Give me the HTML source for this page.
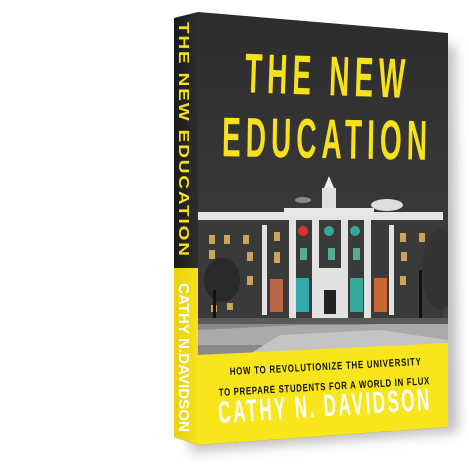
<!DOCTYPE html>
<html><head><style>
html,body{margin:0;padding:0;background:#fff;width:469px;height:469px;overflow:hidden}
svg{display:block}
text{font-family:"Liberation Sans",sans-serif;font-weight:bold}
</style></head><body>
<svg width="469" height="469" viewBox="0 0 469 469">
<defs>
<filter id="blur" x="-20%" y="-20%" width="140%" height="140%"><feGaussianBlur stdDeviation="6"/></filter>
<clipPath id="front"><polygon points="198,12 448,33 448,427 198,445"/></clipPath>
<linearGradient id="sky" x1="0" y1="0" x2="0" y2="1">
<stop offset="0" stop-color="#2c2c2c"/><stop offset="0.6" stop-color="#3c3c3c"/><stop offset="1" stop-color="#555"/>
</linearGradient>
<linearGradient id="spineG" x1="0" y1="0" x2="1" y2="0">
<stop offset="0" stop-color="#1a1a1a"/><stop offset="1" stop-color="#2e2e2e"/>
</linearGradient>
<linearGradient id="spineY" x1="0" y1="0" x2="1" y2="0">
<stop offset="0" stop-color="#e8d010"/><stop offset="1" stop-color="#f6e21a"/>
</linearGradient>
</defs>
<polygon points="185,30 455,45 458,432 190,452" fill="#000" opacity="0.25" filter="url(#blur)"/>
<polygon points="174,18 198,12 198,445 174,437" fill="url(#spineG)"/>
<polygon points="174,268 198,268 198,445 174,437" fill="url(#spineY)"/>
<g transform="translate(179,22) rotate(90) scale(1,0.8)"><text x="0" y="0" font-size="19" fill="#f4e01a" textLength="234" lengthAdjust="spacing">THE NEW EDUCATION</text></g>
<g transform="translate(179,283) rotate(90) scale(1,0.8)"><text x="0" y="0" font-size="18" fill="#fff" textLength="149" lengthAdjust="spacingAndGlyphs">CATHY N.DAVIDSON</text></g>
<g clip-path="url(#front)">
<rect x="198" y="0" width="260" height="460" fill="url(#sky)"/>
<ellipse cx="387" cy="205" rx="16" ry="6" fill="#ddd"/>
<ellipse cx="303" cy="200" rx="8" ry="3" fill="#888"/>
<rect x="322" y="188" width="14" height="22" fill="#ddd"/>
<polygon points="324,188 329,176 334,188" fill="#eee"/>
<rect x="198" y="212" width="245" height="8" fill="#e4e4e4"/>
<rect x="198" y="220" width="245" height="100" fill="#3a3a3a"/>
<rect x="284" y="208" width="90" height="8" fill="#e8e8e8"/>
<g fill="#e2e2e2">
<rect x="289" y="220" width="7" height="98"/><rect x="312" y="220" width="7" height="98"/>
<rect x="341" y="220" width="7" height="98"/><rect x="364" y="220" width="7" height="98"/>
<rect x="262" y="225" width="5" height="90"/><rect x="389" y="225" width="5" height="90"/>
<rect x="319" y="268" width="22" height="50"/>
</g>
<circle cx="303" cy="231" r="5" fill="#d33"/><circle cx="329" cy="231" r="5" fill="#3a9"/><circle cx="355" cy="231" r="5" fill="#3a9"/>
<rect x="270" y="279" width="13" height="33" fill="#b64"/>
<rect x="296" y="278" width="13" height="34" fill="#3aa"/><rect x="350" y="278" width="13" height="34" fill="#3a9"/>
<rect x="374" y="278" width="13" height="34" fill="#c63"/>
<rect x="324" y="290" width="12" height="24" fill="#222"/>
<g fill="#c9a55a">
<rect x="209" y="235" width="6" height="9"/><rect x="224" y="235" width="6" height="9"/><rect x="243" y="235" width="6" height="9"/>
<rect x="209" y="250" width="6" height="9"/><rect x="247" y="252" width="6" height="9"/><rect x="247" y="276" width="6" height="9"/>
<rect x="211" y="305" width="6" height="7"/><rect x="227" y="303" width="6" height="7"/>
<rect x="274" y="232" width="6" height="9"/><rect x="274" y="252" width="6" height="11"/>
<rect x="400" y="233" width="6" height="9"/><rect x="419" y="233" width="6" height="9"/>
<rect x="401" y="252" width="6" height="9"/><rect x="400" y="276" width="6" height="9"/>
<rect x="300" y="248" width="7" height="12" fill="#5a9"/><rect x="328" y="248" width="7" height="12" fill="#5a9"/><rect x="353" y="248" width="7" height="12" fill="#5a9"/>
</g>
<ellipse cx="222" cy="280" rx="18" ry="22" fill="#2a2a2a"/>
<rect x="213" y="290" width="3" height="40" fill="#111"/>
<ellipse cx="440" cy="270" rx="18" ry="40" fill="#333"/>
<rect x="419" y="270" width="3" height="58" fill="#111"/>
<rect x="198" y="318" width="260" height="40" fill="#8a8a8a"/>
<polygon points="198,330 300,325 360,325 450,320 450,345 198,345" fill="#aaa"/>
<polygon points="280,335 380,330 448,340 448,360 240,360" fill="#c4c4c4"/>
<rect x="198" y="318" width="260" height="6" fill="#5a5a5a"/>
<polygon points="198,355 448,343 448,460 198,460" fill="#f8e51c"/>
</g>
<g transform="rotate(2 325 75) translate(245,95) scale(0.5,1)"><text x="0" y="0" font-size="56" fill="#f6e11a" textLength="320" lengthAdjust="spacing">THE NEW</text></g>
<g transform="rotate(1 325 140) translate(222,158) scale(0.5,1)"><text x="0" y="0" font-size="56" fill="#f6e11a" textLength="410" lengthAdjust="spacing">EDUCATION</text></g>
<g transform="rotate(-3 230 375) translate(230,375) scale(0.75,1)"><text x="0" y="0" font-size="10.5" fill="#111" textLength="255" lengthAdjust="spacing">HOW TO REVOLUTIONIZE THE UNIVERSITY</text></g>
<g transform="rotate(-3.2 219 396) translate(219,396) scale(0.75,1)"><text x="0" y="0" font-size="10.5" fill="#111" textLength="281" lengthAdjust="spacing">TO PREPARE STUDENTS FOR A WORLD IN FLUX</text></g>
<g transform="rotate(-3.6 219 423) translate(219,423) scale(0.55,1)"><text x="0" y="0" font-size="31" fill="#fff" textLength="384" lengthAdjust="spacing">CATHY N. DAVIDSON</text></g>
</svg>
</body></html>
